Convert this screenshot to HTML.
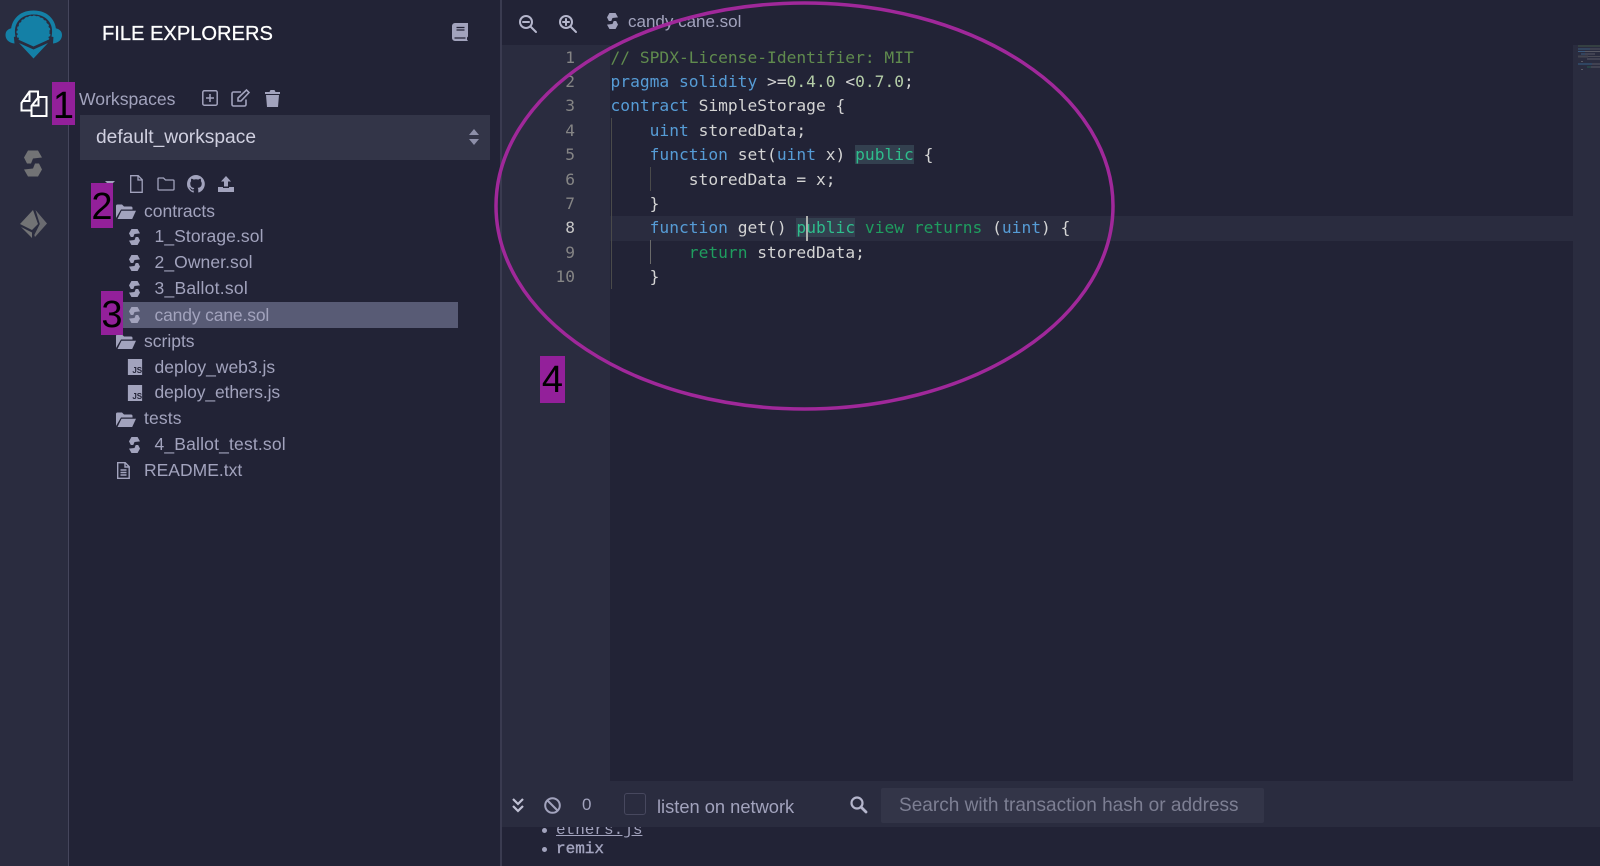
<!DOCTYPE html>
<html><head><meta charset="utf-8"><style>
html,body{margin:0;padding:0;width:1600px;height:866px;overflow:hidden;background:#222336}
*{box-sizing:border-box}
.a{position:absolute;white-space:nowrap}
.t{position:absolute;white-space:nowrap;font-family:"Liberation Sans",sans-serif;font-size:17.5px;color:#a2a3bd;line-height:26px;height:26px}
.c{position:absolute;left:610.5px;white-space:pre;font-family:"DejaVu Sans Mono",monospace;font-size:16.25px;line-height:24.4px;color:#d4d4d4}
.n{position:absolute;width:40px;left:535px;text-align:right;font-family:"DejaVu Sans Mono",monospace;font-size:16.2px;line-height:24.4px;color:#858585}
.k{color:#569cd6}.g{color:#1f9d5f}.m{color:#608b4e}.v{color:#b5cea8}.p{color:#2ebd8c;background:#33404f}
.b{position:absolute;background:#93209a;color:#000;font-family:"Liberation Sans",sans-serif;font-size:38px;line-height:48px;text-align:center}
svg{position:absolute;overflow:visible}
</style></head><body>
<svg width="0" height="0" style="position:absolute"><defs>
<g id="sol"><polygon points="4,0 14,0 18,7 9,8 7,13 3,13 0,7"/><polygon points="14,26 4,26 0,19 9,18 11,13 15,13 18,19"/></g>
<g id="js"><path d="M0 0h16v18H0z"/><text x="5" y="15.5" font-family="Liberation Sans,sans-serif" font-size="9" font-weight="bold" fill="#222336">JS</text></g>
<g id="fo"><path d="M0 15V3a1.5 1.5 0 0 1 1.5-1.5H6l2 2h7a1.5 1.5 0 0 1 1.5 1.5v1.5H5L0 15z"/><path d="M5.5 7.8H20l-3.8 8.2H1.5z"/></g>
</defs></svg>

<div class="a" style="left:0;top:0;width:69px;height:866px;background:#2a2c3f;border-right:1px solid #45465c"></div>
<div class="a" style="left:500px;top:0;width:2px;height:866px;background:#3a3b50"></div>
<div class="a" style="left:502px;top:45px;width:108px;height:736px;background:#2a2c3f"></div>
<div class="a" style="left:1573px;top:45px;width:27px;height:736px;background:#2a2c3f"></div>
<div class="a" style="left:610px;top:216px;width:963px;height:24.5px;background:#2a2c3f"></div>

<!-- logo -->
<svg style="left:0;top:0" width="68" height="62" viewBox="0 0 68 62">
<path d="M13.500 37C10.500 22 20 12.500 33.500 12.500S56.500 22 53.500 37" fill="none" stroke="#1480a6" stroke-width="4"/>
<path d="M13 28C8 28.500 5.500 31 5.500 35s3 8 9 8.500zM54 28c5 .5 8 3 8 7s-3 8-9 8.500z" fill="#1480a6"/>
<path d="M18 39.500A17 17 0 1 1 49 39.500L33.500 46.500z" fill="#1480a6"/>
<circle cx="33.500" cy="32" r="16.800" fill="none" stroke="#2a2c3f" stroke-width="1.500" stroke-dasharray="2 2.500"/>
<path d="M19 43L33.500 49.500 48 43 33.500 58.500z" fill="#1480a6"/>
</svg>
<!-- sidebar icons -->
<svg style="left:20px;top:90px" width="28" height="28" viewBox="0 0 28 28" fill="none" stroke="#fff" stroke-width="2" stroke-linejoin="miter">
<path d="M1.500 13L9.500 1.500h8.500v19H1.500z" fill="#2a2c3f"/><path d="M9.500 1.500v9.500H2"/><path d="M11.500 16l7-9h8v19h-15z" fill="#2a2c3f"/><path d="M18.500 7v8.500h-7"/></svg>
<svg style="left:24px;top:150px" width="18" height="27" viewBox="0 0 18 26" fill="#727375"><use href="#sol"/></svg>
<svg style="left:20px;top:209px" width="28" height="29" viewBox="0 0 28 29"><g fill="#727375"><path d="M13 1L0 15l12 6 6-6z"/><path d="M15.500 1l11.500 13.500L15 28l-.7-2 5.500-11z" fill="#6a6b70"/><path d="M1 18l11 5.500V29z"/></g></svg>

<!-- panel -->
<div class="a" style="left:102px;top:20px;font:20.1px/28px 'Liberation Sans',sans-serif;color:#fff;-webkit-text-stroke:.3px #fff">FILE EXPLORERS</div>
<svg style="left:452px;top:23px" width="16" height="18" viewBox="0 0 16 18"><path d="M3 0h13v13.500l-1 1v2l1 1.500H3a3 3 0 0 1-3-3V3a3 3 0 0 1 3-3z" fill="#a2a3bd"/><path d="M4.500 4.500h8M4.500 7h8M2.500 15h11" stroke="#222336" stroke-width="1.300"/></svg>
<div class="t" style="left:79px;top:86px;font-size:17.6px">Workspaces</div>
<svg style="left:202px;top:90px" width="16" height="16" viewBox="0 0 16 16" fill="none" stroke="#a2a3bd" stroke-width="1.500"><rect x=".8" y=".8" width="14.400" height="14.400" rx="1.500"/><path d="M4 8h8M8 4v8"/></svg>
<svg style="left:231px;top:89px" width="20" height="18" viewBox="0 0 20 18" fill="none" stroke="#a2a3bd" stroke-width="1.600"><path d="M15 10.500V15.500a1.500 1.500 0 0 1-1.500 1.500h-11A1.500 1.500 0 0 1 1 15.500v-11A1.500 1.500 0 0 1 2.500 3H10"/><path d="M7 9L15.500 1 18 3.500 10 12H7z" fill="none"/></svg>
<svg style="left:265px;top:90px" width="15" height="17" viewBox="0 0 15 17" fill="#a2a3bd"><path d="M0 2h4.500l1-2h4l1 2H15v2H0zM1 5h13l-1 12H2z"/></svg>

<div class="a" style="left:80px;top:115px;width:410px;height:45px;background:#333548"></div>
<div class="a" style="left:96px;top:125px;font:19.2px/26px 'Liberation Sans',sans-serif;color:#d0d0e0">default_workspace</div>
<svg style="left:469px;top:129px" width="10" height="16" viewBox="0 0 10 16" fill="#8d8fa9"><path d="M5 0l5 6H0zM5 16L0 10h10z"/></svg>

<svg style="left:105px;top:181px" width="10" height="5" viewBox="0 0 10 5" fill="#a2a3bd"><path d="M0 0h10L5 5z"/></svg>
<svg style="left:130px;top:175px" width="13" height="18" viewBox="0 0 13 18" fill="none" stroke="#a2a3bd" stroke-width="1.300"><path d="M.7.7h7.500l4 4v12.600H.7zM8 .7V5h4.200"/></svg>
<svg style="left:157px;top:177px" width="18" height="14" viewBox="0 0 18 14" fill="none" stroke="#a2a3bd" stroke-width="1.300"><path d="M1 12V2A1 1 0 0 1 2 1h4.500l2 2H16a1 1 0 0 1 1 1v8a1 1 0 0 1-1 1H2a1 1 0 0 1-1-1z"/></svg>
<svg style="left:187px;top:175px" width="18" height="18" viewBox="0 0 16 16" fill="#a2a3bd"><path d="M8 0a8 8 0 0 0-2.500 15.600c.4.100.5-.2.500-.4v-1.400c-2.200.5-2.700-1-2.700-1-.4-.9-.9-1.200-.9-1.200-.7-.5.100-.5.100-.5.800.1 1.200.8 1.200.8.700 1.200 1.900.9 2.300.7.100-.5.300-.9.500-1.100-1.800-.2-3.600-.9-3.600-4 0-.9.300-1.600.8-2.100-.1-.2-.4-1 .1-2.100 0 0 .7-.2 2.200.8a7.500 7.500 0 0 1 4 0c1.500-1 2.200-.8 2.200-.8.400 1.100.2 1.900.1 2.100.5.600.8 1.300.8 2.100 0 3.100-1.900 3.700-3.700 3.900.3.300.6.800.6 1.500v2.200c0 .2.100.5.600.4A8 8 0 0 0 8 0z"/></svg>
<svg style="left:218px;top:176px" width="16" height="16" viewBox="0 0 16 16" fill="#a2a3bd"><path d="M8 0l5 5.500h-3v5H6v-5H3zM0 11h5v1h6v-1h5v5H0z"/></svg>

<svg style="left:116px;top:203px" width="21" height="16" viewBox="0 0 21 16" fill="#a2a3bd"><use href="#fo"/></svg>
<div class="t" style="left:144px;top:197.500px">contracts</div>
<svg style="left:129px;top:229px" width="11" height="16" viewBox="0 0 18 26" fill="#a2a3bd"><use href="#sol"/></svg>
<div class="t" style="left:154.500px;top:223px;letter-spacing:.08px">1_Storage.sol</div>
<svg style="left:129px;top:255px" width="11" height="16" viewBox="0 0 18 26" fill="#a2a3bd"><use href="#sol"/></svg>
<div class="t" style="left:154.500px;top:249px;letter-spacing:.08px">2_Owner.sol</div>
<svg style="left:129px;top:281px" width="11" height="16" viewBox="0 0 18 26" fill="#a2a3bd"><use href="#sol"/></svg>
<div class="t" style="left:154.500px;top:275px;letter-spacing:.25px">3_Ballot.sol</div>
<div class="a" style="left:123px;top:302px;width:335px;height:26px;background:#585b75"></div>
<svg style="left:129px;top:307px" width="11" height="16" viewBox="0 0 18 26" fill="#a2a3bd"><use href="#sol"/></svg>
<div class="t" style="left:154.500px;top:301.500px;letter-spacing:-.15px">candy cane.sol</div>
<svg style="left:116px;top:333px" width="21" height="16" viewBox="0 0 21 16" fill="#a2a3bd"><use href="#fo"/></svg>
<div class="t" style="left:144px;top:327.500px">scripts</div>
<svg style="left:127px;top:359px" width="16" height="16" viewBox="0 0 16 18" fill="#a2a3bd"><use href="#js"/></svg>
<div class="t" style="left:154.500px;top:353.500px">deploy_web3.js</div>
<svg style="left:127px;top:385px" width="16" height="16" viewBox="0 0 16 18" fill="#a2a3bd"><use href="#js"/></svg>
<div class="t" style="left:154.500px;top:379px;letter-spacing:-.12px">deploy_ethers.js</div>
<svg style="left:116px;top:411px" width="21" height="16" viewBox="0 0 21 16" fill="#a2a3bd"><use href="#fo"/></svg>
<div class="t" style="left:144px;top:405px;letter-spacing:.15px">tests</div>
<svg style="left:129px;top:437px" width="11" height="16" viewBox="0 0 18 26" fill="#a2a3bd"><use href="#sol"/></svg>
<div class="t" style="left:154.500px;top:431px;letter-spacing:.17px">4_Ballot_test.sol</div>
<svg style="left:117px;top:462px" width="13" height="17" viewBox="0 0 13 17" fill="none" stroke="#a2a3bd" stroke-width="1.400"><path d="M.7.700h7.500l4 4v11.600H.7zM8 .7V5h4.200M3.500 8h6M3.500 10.500h6M3.500 13h6"/></svg>
<div class="t" style="left:144px;top:457px">README.txt</div>

<!-- editor top -->
<svg style="left:519px;top:15px" width="18" height="18" viewBox="0 0 18 18" fill="none" stroke="#b5b6cc" stroke-width="2"><circle cx="7" cy="7" r="6"/><path d="M11.500 11.500L17 17M4 7h6" stroke-linecap="round"/></svg>
<svg style="left:559px;top:15px" width="18" height="18" viewBox="0 0 18 18" fill="none" stroke="#b5b6cc" stroke-width="2"><circle cx="7" cy="7" r="6"/><path d="M11.500 11.500L17 17M4 7h6M7 4v6" stroke-linecap="round"/></svg>
<svg style="left:607px;top:13px" width="11" height="16" viewBox="0 0 18 26" fill="#a2a3bd"><use href="#sol"/></svg>
<div class="t" style="left:628px;top:9px;font-size:17px">candy cane.sol</div>

<!-- code -->
<div class="n" style="top:45.500px">1</div><div class="n" style="top:69.900px">2</div><div class="n" style="top:94.300px">3</div><div class="n" style="top:118.700px">4</div><div class="n" style="top:143.100px">5</div><div class="n" style="top:167.500px">6</div><div class="n" style="top:191.900px">7</div><div class="n" style="top:216.300px;color:#c6c6c6">8</div><div class="n" style="top:240.700px">9</div><div class="n" style="top:265.100px">10</div>
<div class="a" style="left:610.500px;top:118px;width:1px;height:171px;background:#4a4a4a"></div>
<div class="a" style="left:649.500px;top:167px;width:1px;height:24px;background:#4a4a4a"></div>
<div class="a" style="left:649.500px;top:240px;width:1px;height:24px;background:#6a6a6a"></div>
<div class="c" style="top:45.500px"><span class="m">// SPDX-License-Identifier: MIT</span></div>
<div class="c" style="top:69.900px"><span class="k">pragma solidity</span> &gt;=<span class="v">0.4.0</span> &lt;<span class="v">0.7.0</span>;</div>
<div class="c" style="top:94.300px"><span class="k">contract</span> SimpleStorage {</div>
<div class="c" style="top:118.700px">    <span class="k">uint</span> storedData;</div>
<div class="c" style="top:143.100px">    <span class="k">function</span> set(<span class="k">uint</span> x) <span class="p">public</span> {</div>
<div class="c" style="top:167.500px">        storedData = x;</div>
<div class="c" style="top:191.900px">    }</div>
<div class="c" style="top:216.300px">    <span class="k">function</span> get() <span class="p">public</span> <span class="g">view returns</span> (<span class="k">uint</span>) {</div>
<div class="c" style="top:240.700px">        <span class="g">return</span> storedData;</div>
<div class="c" style="top:265.100px">    }</div>
<div class="a" style="left:805.500px;top:216px;width:2px;height:24.500px;background:#aeafad"></div>

<!-- minimap -->
<svg style="left:1573px;top:45px" width="27" height="28" viewBox="0 0 27 28" opacity=".42">
<path d="M5 1h22" stroke="#608b4e"/><path d="M5 4h12" stroke="#569cd6"/><path d="M17 4h10" stroke="#888"/><path d="M5 6.500h7" stroke="#569cd6"/><path d="M12 6.500h15" stroke="#999"/><path d="M8 9h4" stroke="#569cd6"/><path d="M12 9h10" stroke="#999"/><path d="M5 11.500h10" stroke="#666" stroke-width="2"/><path d="M15 11.500h12" stroke="#777"/><path d="M14 14h13" stroke="#999"/><path d="M8 16.500h2" stroke="#999"/><path d="M5 19h14" stroke="#3a6a96" stroke-width="2"/><path d="M19 19h8" stroke="#999"/><path d="M14 22h4" stroke="#1f9d5f"/><path d="M18 22h9" stroke="#999"/><path d="M8 24.500h2" stroke="#999"/>
</svg>

<!-- terminal -->
<div class="a" style="left:502px;top:781px;width:1098px;height:46px;background:#2a2c3f"></div>
<svg style="left:512px;top:798px" width="12" height="14" viewBox="0 0 12 14" fill="none" stroke="#c0c1d4" stroke-width="2.200"><path d="M1 1l5 5 5-5M1 8l5 5 5-5"/></svg>
<svg style="left:544px;top:797px" width="17" height="17" viewBox="0 0 17 17" fill="none" stroke="#a2a3bd" stroke-width="2"><circle cx="8.500" cy="8.500" r="7.300"/><path d="M3.500 3.500l10 10"/></svg>
<div class="t" style="left:582px;top:792px;font-size:17px">0</div>
<div class="a" style="left:624px;top:793px;width:22px;height:22px;border:1.500px solid #47485e;border-radius:3px;background:#2a2c3f"></div>
<div class="t" style="left:657px;top:794px;font-size:18.300px">listen on network</div>
<svg style="left:850px;top:796px" width="17" height="17" viewBox="0 0 17 17" fill="none" stroke="#b5b6cc" stroke-width="2.200"><circle cx="7" cy="7" r="5.500"/><path d="M11 11l5 5" stroke-linecap="round" stroke-width="2.800"/></svg>
<div class="a" style="left:881px;top:788px;width:383px;height:35px;background:#333548;border-radius:2px"></div>
<div class="t" style="left:899px;top:793px;font-size:19.050px;color:#7d7f93">Search with transaction hash or address</div>
<div class="a" style="left:556px;top:827px;width:100px;height:11px;overflow:hidden"><div class="a" style="left:0;top:-7px;font:16px/20px 'Liberation Mono',monospace;color:#a2a3bd;text-decoration:underline">ethers.js</div></div>
<div class="a" style="left:556px;top:838px;font:16px/22px 'Liberation Mono',monospace;color:#a2a3bd;-webkit-text-stroke:.4px #a2a3bd">remix</div>
<div class="a" style="left:542px;top:828px;width:5px;height:5px;border-radius:50%;background:#a2a3bd"></div>
<div class="a" style="left:542px;top:846.500px;width:5px;height:5px;border-radius:50%;background:#a2a3bd"></div>

<!-- annotations -->
<div class="b" style="left:52px;top:82px;width:23px;height:43px">1</div>
<div class="b" style="left:91px;top:183px;width:22px;height:45px">2</div>
<div class="b" style="left:101px;top:291px;width:22px;height:44px">3</div>
<div class="b" style="left:540px;top:356px;width:25px;height:47px">4</div>
<svg style="left:0;top:0" width="1600" height="866"><ellipse cx="804.500" cy="206" rx="308.500" ry="203" fill="none" stroke="#a0289a" stroke-width="3.500"/></svg>
</body></html>
